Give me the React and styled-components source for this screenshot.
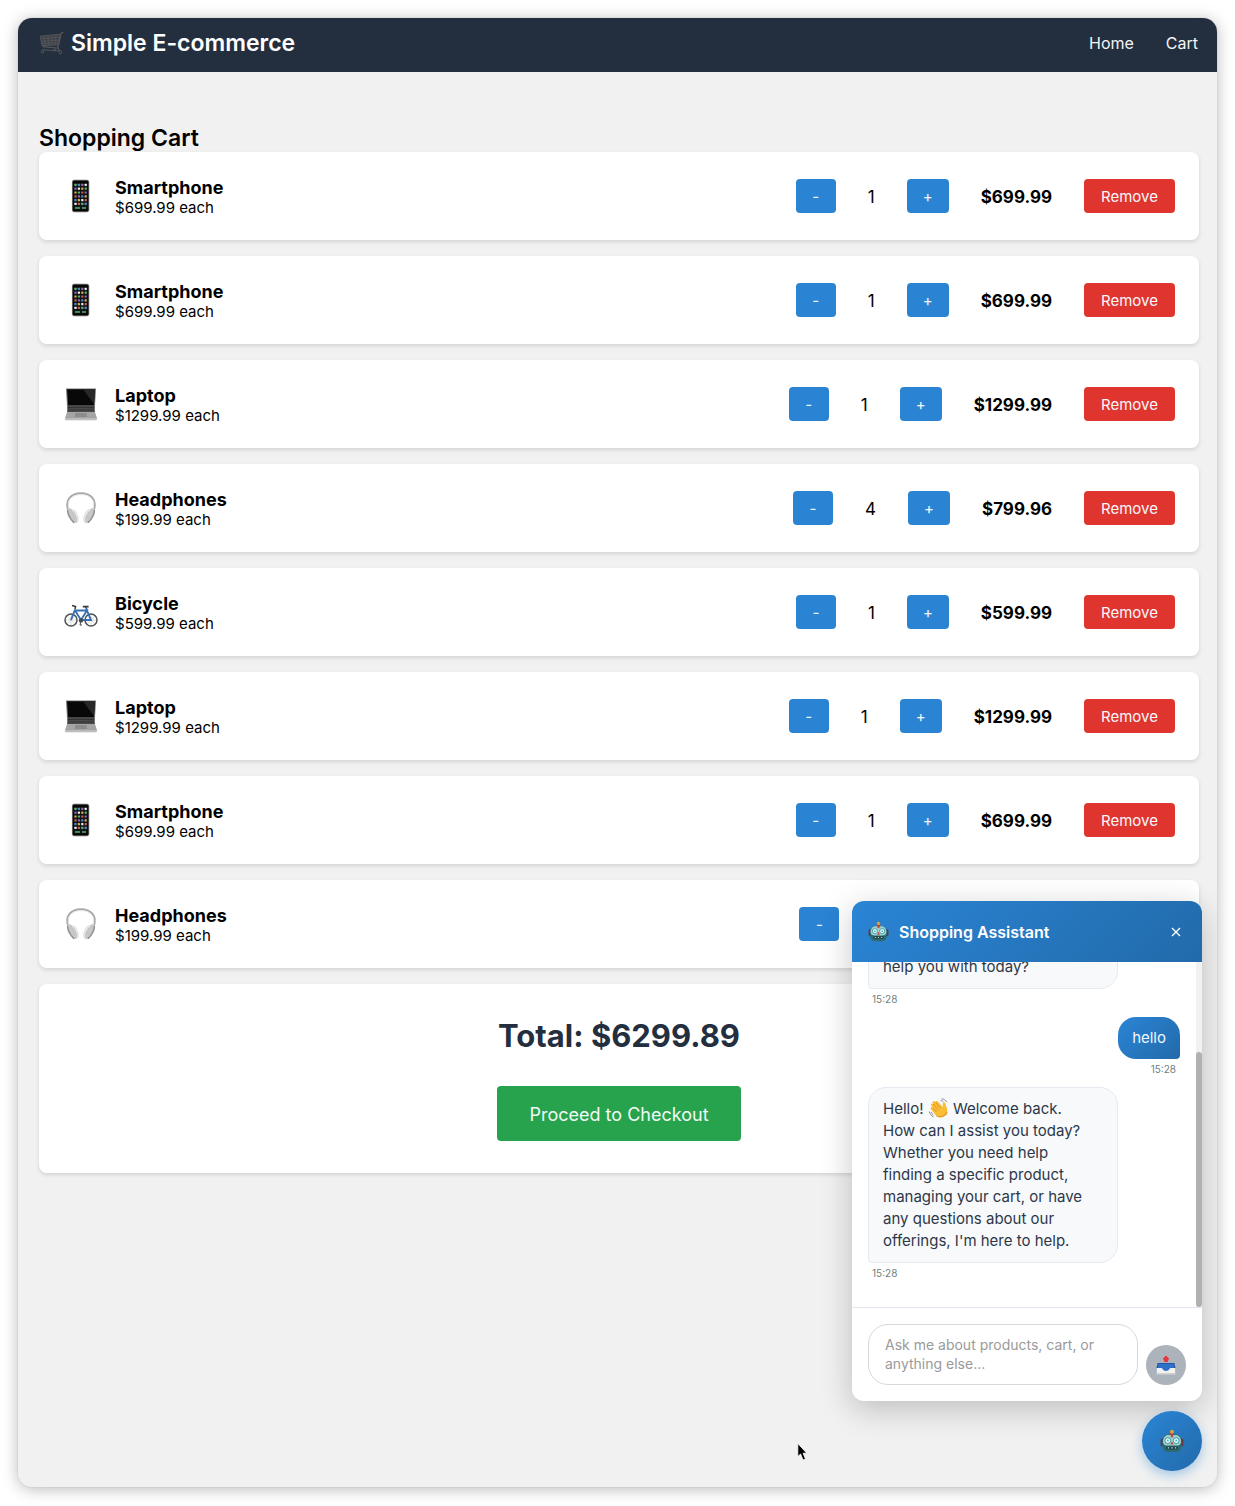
import { useEffect, useRef, useState } from 'react'
import styled, { createGlobalStyle } from 'styled-components'

const GlobalStyle = createGlobalStyle`
    * {
        box-sizing: border-box;
    }
    body {
        margin: 0;
        background: #fff;
        color: #000;
        font-family: Inter, "Liberation Sans", sans-serif;
        font-size: 15px;
    }
    h1, h2, h3, p, ul {
        margin: 0;
        padding: 0;
    }
    button, textarea {
        font-family: inherit;
    }
    svg {
        display: block;
    }
`

const Page = styled.div`
    min-height: 100vh;
    padding: 18px 18px 19px;
    display: flex;
`

const Window = styled.div`
    position: relative;
    flex: 1;
    min-width: 0;
    background: #f1f1f1;
    border-radius: 14px;
    overflow: hidden;
`

const WindowShadow = styled.div`
    flex: 1;
    display: flex;
    min-width: 0;
    border-radius: 14px;
    box-shadow: 0 0 1px rgba(0, 0, 0, 0.3), 0 2px 16px rgba(0, 0, 0, 0.28);
`

const Header = styled.header`
    display: flex;
    justify-content: space-between;
    align-items: center;
    height: 54px;
    padding: 0 19px 4px 21px;
    background: #232f3e;
    color: #fff;
`

const Brand = styled.h1`
    display: flex;
    align-items: center;
    gap: 7px;
    font-size: 23px;
    font-weight: 600;
`

const Nav = styled.nav`
    display: flex;
    gap: 32px;

    a {
        color: #f4f5f6;
        font-size: 16px;
        line-height: 18px;
        text-decoration: none;
    }
`

const Main = styled.main`
    padding: 53px 18px 40px 21px;
`

const Title = styled.h2`
    font-size: 23px;
    line-height: 27px;
    font-weight: 600;
`

const CartList = styled.ul`
    display: flex;
    flex-direction: column;
    gap: 16px;
    list-style: none;
`

const CartItem = styled.li`
    display: flex;
    align-items: center;
    justify-content: space-between;
    height: 88px;
    padding: 0 24px;
    background: #fff;
    border-radius: 8px;
    box-shadow: 0 2px 4px rgba(0, 0, 0, 0.12);
`

const Product = styled.div`
    display: flex;
    align-items: center;
    gap: 16px;
`

const ProductInfo = styled.div`
    padding-top: 2px;
`

const ProductName = styled.h3`
    font-size: 18px;
    line-height: 22px;
    font-weight: 700;
`

const ProductPrice = styled.p`
    font-size: 15px;
    line-height: 18px;
`

const Controls = styled.div`
    display: flex;
    align-items: center;
    gap: 32px;
`

const Button = styled.button`
    height: 34px;
    width: ${(props) => props.$width};
    padding: 0;
    border: none;
    border-radius: 4px;
    background: ${(props) => props.$color};
    color: #f4f8fc;
    font-size: 15px;
    cursor: pointer;
`

const Quantity = styled.span`
    padding-top: 2px;
    font-size: 17px;
`

const Subtotal = styled.strong`
    padding-top: 2px;
    font-size: 17px;
    font-weight: 700;
`

const Summary = styled.section`
    display: flex;
    flex-direction: column;
    align-items: center;
    gap: 31px;
    margin-top: 16px;
    padding: 32px;
    background: #fff;
    border-radius: 8px;
    box-shadow: 0 2px 4px rgba(0, 0, 0, 0.12);
`

const Total = styled.h3`
    color: #232f3e;
    font-size: 31px;
    line-height: 39px;
    font-weight: 700;
`

const Checkout = styled.button`
    height: 55px;
    padding: 2px 32px 0;
    border: none;
    border-radius: 4px;
    background: #27a34e;
    color: #f1faf4;
    font-size: 18px;
    cursor: pointer;
`

const ChatDock = styled.div`
    position: absolute;
    right: 15px;
    bottom: 16px;
    display: flex;
    flex-direction: column;
    align-items: flex-end;
    gap: 10px;
`

const ChatPanel = styled.section`
    display: flex;
    flex-direction: column;
    width: 350px;
    height: 500px;
    background: #fff;
    border-radius: 12px;
    overflow: hidden;
    box-shadow: 0 8px 32px rgba(0, 0, 0, 0.22);
`

const ChatHeader = styled.header`
    display: flex;
    align-items: center;
    gap: 10px;
    height: 61px;
    flex-shrink: 0;
    padding: 0 16px;
    background: linear-gradient(135deg, #2a85d5, #226aaa);
    color: #fff;
`

const ChatTitle = styled.h3`
    flex: 1;
    font-size: 16px;
    font-weight: 600;
`

const CloseButton = styled.button`
    display: grid;
    place-items: center;
    width: 20px;
    height: 20px;
    padding: 0;
    border: none;
    background: none;
    color: #fff;
    cursor: pointer;
`

const ChatBody = styled.div`
    display: flex;
    flex: 1;
    min-height: 0;
`

const Messages = styled.div`
    flex: 1;
    min-width: 0;
    padding: 82px 16px 16px;
    overflow-y: auto;
    scrollbar-width: none;
`

const ScrollTrack = styled.div`
    width: 6px;
    background: #f1f1f1;
`

const ScrollThumb = styled.div`
    border-radius: 3px;
    background: #b1b1b1;
`

const Message = styled.div`
    display: flex;
    flex-direction: column;
    align-items: ${(props) => (props.$mine ? 'flex-end' : 'flex-start')};
    gap: 4px;
    margin-bottom: 12px;
`

const Bubble = styled.p`
    max-width: 80%;
    padding: ${(props) => (props.$mine ? '10px 14px' : '10px 22px 10px 14px')};
    border: ${(props) => (props.$mine ? 'none' : '1px solid #e5e9f0')};
    border-radius: ${(props) => (props.$mine ? '18px 18px 4px 18px' : '18px 18px 18px 4px')};
    background: ${(props) => (props.$mine ? 'linear-gradient(135deg, #2a85d5, #226aaa)' : '#f7f9fb')};
    color: ${(props) => (props.$mine ? '#f2f7fc' : '#2d3748')};
    font-size: 15px;
    line-height: 22px;

    svg {
        display: inline-block;
        vertical-align: -4px;
    }
`

const Time = styled.time`
    padding: 0 4px;
    color: #718080;
    font-size: 10px;
    line-height: 12px;
`

const Composer = styled.form`
    display: flex;
    align-items: flex-end;
    gap: 8px;
    padding: 16px;
    border-top: 1px solid #e2e6ee;
`

const Input = styled.textarea`
    flex: 1;
    min-width: 0;
    height: 61px;
    padding: 10px 16px;
    border: 1px solid #d8d8d8;
    border-radius: 20px;
    background: #fff;
    font-size: 14px;
    line-height: 19px;
    resize: none;
    overflow: hidden;

    &::placeholder {
        color: #9a9a9a;
    }
`

const RoundButton = styled.button`
    display: grid;
    place-items: center;
    width: ${(props) => props.$size};
    height: ${(props) => props.$size};
    padding: 0;
    border: none;
    border-radius: 50%;
    background: ${(props) => props.$background};
    box-shadow: ${(props) => props.$shadow || 'none'};
    cursor: pointer;
`

const Pointer = styled.svg`
    position: absolute;
    left: 65%;
    bottom: 25px;
`

const CartIcon = () => (
    <svg width="25" height="25" viewBox="0 0 25 25" fill="none" stroke="#56585d" aria-hidden="true">
        <path d="M24.5 1 L22.2 2.2 L18.8 17 L3.5 15.6" strokeWidth="1.2" />
        <path d="M1.2 5.2 L21.6 3.2 L19.2 14 L3 14.6 Z" fill="#3d4248" strokeWidth="0.9" />
        <path d="M1.8 7.8 L21 6 M2.2 10.4 L20.3 9 M2.8 12.6 L19.8 11.6 M5 5 L6.4 14.4 M9 4.6 L9.6 14.2 M13 4.2 L13 14 M17 3.8 L16.3 14" strokeWidth="0.7" />
        <path d="M18.8 17 L20.8 20 L3 18.8" strokeWidth="1.1" />
        <circle cx="3.6" cy="20.8" r="1.3" fill="#292b2e" />
        <circle cx="21.4" cy="21.4" r="1.5" fill="#292b2e" />
        <circle cx="15.8" cy="19" r="1" fill="#292b2e" />
    </svg>
)

const appColors = ['#55b565', '#e7ebea', '#5287c5', '#d35b4e', '#dfac44', '#9564ab']

const PhoneIcon = () => (
    <svg width="36" height="36" viewBox="0 0 36 36" aria-hidden="true">
        <rect x="9.4" y="2.2" width="16.4" height="31.6" rx="1.8" fill="#080808" stroke="#555" strokeWidth="0.7" />
        <rect x="10.9" y="5" width="13.4" height="26" fill="#111519" />
        {[0, 1, 2, 3, 4, 5].map((row) => [0, 1, 2, 3].map((col) => (
            <rect
                key={`${row}-${col}`}
                x={11.4 + col * 3.4}
                y={5.8 + row * 3.8}
                width="2.2"
                height="2.2"
                rx="0.5"
                fill={appColors[(row * 5 + col * 2 + (col > 1 ? 1 : 0)) % 6]}
            />
        )))}
        <path d="M12 30 H17 M19 30 H23" stroke="#53b065" strokeWidth="1.6" />
    </svg>
)

const LaptopIcon = () => (
    <svg width="36" height="36" viewBox="0 0 36 36" aria-hidden="true">
        <path d="M3 2.5 H33 L31.8 23 H4.2 Z" fill="#777" />
        <path d="M4 3.2 H32 L31 19.5 H5 Z" fill="#080808" />
        <path d="M20 3.2 H32 L31 18 Z" fill="#27282a" />
        <path d="M5 19.5 H31 L32 26.5 H4 Z" fill="#4a4a4c" />
        <path d="M5 21.5 H31 M4.6 24 H31.4" stroke="#343435" strokeWidth="1" />
        <path d="M4 26 H32 L34 32.5 H2 Z" fill="#a5a5a5" />
        <path d="M12.5 27 H23.5 L24.3 31 H11.7 Z" fill="#8c8c8c" />
        <path d="M2 32.5 H34 L33.3 34 H2.7 Z" fill="#c9c9c9" stroke="#999" strokeWidth="0.4" />
    </svg>
)

const HeadphonesIcon = () => (
    <svg width="36" height="36" viewBox="0 0 36 36" fill="none" aria-hidden="true">
        <path d="M5.5 21 C1 9 9 3.2 18 3.2 S35 9 30.5 21" stroke="#a9a9a9" strokeWidth="2" />
        <path d="M6.2 20 C2.5 9.5 10 4.5 18 4.5 S33.5 9.5 29.8 20" stroke="#e3e3e3" strokeWidth="1" />
        <path d="M4.2 19.5 C6 17 9 18.5 11 21.5 L14.4 28 C16 31.5 13 34.5 10.5 32.4 L5 25 Z" fill="#c6c7c9" />
        <path d="M9 20 C12.5 20 16.5 27 14.5 32" stroke="#e6e6e6" strokeWidth="1.8" />
        <path d="M4.5 20 C4.8 25 7.5 29.5 11 32.8" stroke="#8d8e90" strokeWidth="1.4" />
        <path d="M31.8 19.5 C30 17 27 18.5 25 21.5 L21.6 28 C20 31.5 23 34.5 25.5 32.4 L31 25 Z" fill="#c6c7c9" />
        <path d="M27 20 C23.5 20 19.5 27 21.5 32" stroke="#e6e6e6" strokeWidth="1.8" />
        <path d="M31.5 20 C31.2 25 28.5 29.5 25 32.8" stroke="#8d8e90" strokeWidth="1.4" />
    </svg>
)

const BicycleIcon = () => (
    <svg width="36" height="36" viewBox="0 -4 36 36" fill="none" aria-hidden="true">
        <g fill="#f3f4f5" stroke="#bfc2c5" strokeWidth="0.6">
            <path d="M2.5 22 H13.5 M8 17 V27 M4.1 18.1 L11.9 25.9 M4.1 25.9 L11.9 18.1" />
            <path d="M22.5 22 H33.5 M28 17 V27 M24.1 18.1 L31.9 25.9 M24.1 25.9 L31.9 18.1" />
        </g>
        <g stroke="#505357" strokeWidth="1.5">
            <circle cx="8" cy="22" r="6" />
            <circle cx="28" cy="22" r="6" />
        </g>
        <path d="M8 22 L12 11.5 M12 12.5 H24 L18 22 L12 12.5 M24 12.5 L28 22 H18 M22.8 9 L24.3 13" stroke="#356fb5" strokeWidth="1.9" />
        <path d="M9 7.5 L12.5 8.5 L12 11 M19.8 8.6 H25.6" stroke="#38393b" strokeWidth="1.6" />
        <circle cx="18" cy="22.4" r="2.2" fill="#454a50" />
        <path d="M18 23 L17 27 H19" stroke="#454a50" strokeWidth="1" />
    </svg>
)

const RobotIcon = ({ size }) => (
    <svg width={size} height={size} viewBox="0 0 24 24" aria-hidden="true">
        <rect x="0.6" y="9.5" width="4" height="8" rx="1.8" fill="#6b3642" />
        <rect x="19.4" y="9.5" width="4" height="8" rx="1.8" fill="#6b3642" />
        <path d="M10 3 H14 V6.5 H10 Z" fill="#a83c33" />
        <circle cx="12" cy="2.8" r="2" fill="#d9a43b" />
        <path d="M7 5.6 H17 C20 6.6 21.8 9.5 21.8 13 C21.8 19 20.6 23 16.5 23 H7.5 C3.4 23 2.2 19 2.2 13 C2.2 9.5 4 6.6 7 5.6 Z" fill="#2d6a72" />
        <path d="M7.2 6 H16.8 C19.6 7 21 9.6 21 12.4 C21 14.5 20 16.5 17 16.5 H7 C4 16.5 3 14.5 3 12.4 C3 9.6 4.4 7 7.2 6 Z" fill="#9ed2cf" />
        <path d="M10.4 5.6 H13.6 L13 8.4 H11 Z" fill="#bf5046" />
        <circle cx="7.8" cy="11.6" r="2.9" fill="#e4fffd" stroke="#3c94a0" strokeWidth="1" />
        <circle cx="16.2" cy="11.6" r="2.9" fill="#e4fffd" stroke="#3c94a0" strokeWidth="1" />
        <circle cx="7.8" cy="11.6" r="1.1" fill="#55b9c7" />
        <circle cx="16.2" cy="11.6" r="1.1" fill="#55b9c7" />
        <path d="M12 12.2 L13.7 15.6 H10.3 Z" fill="#c44a42" />
        <rect x="6" y="17.4" width="12" height="3" rx="1.4" fill="#1c4149" />
        <path d="M7.8 18.8 H9.2 M11.3 18.8 H12.7 M14.8 18.8 H16.2" stroke="#b9d6d3" strokeWidth="1.3" />
    </svg>
)

const WaveIcon = () => (
    <svg width="21" height="20" viewBox="0 0 20 20" fill="none" aria-hidden="true">
        <path d="M7.5 17.5 L2.4 11.2 C1.5 9.6 3.1 8.8 4.1 9.8 L2.6 7.2 C1.9 5.6 3.6 4.8 4.6 6.1 L4.2 4.7 C3.8 3 5.6 2.5 6.5 3.8 L7 4.3 C7 2.7 8.7 2.5 9.5 3.8 L14.2 9 L14.3 5.8 C14.5 3.9 16.7 4.1 17 5.8 C17.2 8.2 19.2 10.5 18.8 13.8 C18.2 18.5 11.6 21.3 7.5 17.5 Z" fill="#f9be35" />
        <path d="M4.1 9.8 L8 14 M4.6 6.1 L10 12.3 M7 4.3 L12 10.4" stroke="#d7902a" strokeWidth="0.9" />
        <path d="M8 17.8 C12.5 20.2 17.5 17.8 18.6 14" stroke="#e49b29" strokeWidth="1.3" />
        <path d="M13 0.8 C15.5 1 17.2 2 18 4 M12.2 2.6 C13.6 2.7 14.5 3.2 15 4 M0.8 13.5 C1.3 16 2.6 17.8 5 18.8 M2.6 14 C3 15.3 3.7 16.2 4.8 17" stroke="#8a8c91" strokeWidth="1" />
    </svg>
)

const OutboxIcon = () => (
    <svg width="20" height="20" viewBox="0 0 20 20" aria-hidden="true">
        <path d="M1.6 8 H18.4 L19.5 13 V19 H0.5 V13 Z" fill="#2157a5" />
        <path d="M2.5 9 H17.5 L18.3 12.5 C14 12.5 14 16 10 16 S6 12.5 1.7 12.5 Z" fill="#2d71cb" />
        <path d="M0.5 13 H5.5 C6.5 13 6.8 16 10 16 S13.5 13 14.5 13 H19.5 V19.2 H0.5 Z" fill="#f1f1ef" />
        <path d="M0.5 18 H19.5 V19.2 H0.5 Z" fill="#cfd0d0" />
        <path d="M10 1 L13 4 H11.6 V6.6 H8.4 V4 H7 Z" fill="#e93640" stroke="#e93640" strokeLinejoin="round" />
    </svg>
)

const CloseIcon = () => (
    <svg width="10" height="10" viewBox="0 0 10 10" fill="none" stroke="currentColor" strokeWidth="1.4" aria-hidden="true">
        <path d="M1 1 L9 9 M9 1 L1 9" />
    </svg>
)

const cart = [
    { id: 1, name: 'Smartphone', price: 699.99, quantity: 1, Icon: PhoneIcon },
    { id: 2, name: 'Smartphone', price: 699.99, quantity: 1, Icon: PhoneIcon },
    { id: 3, name: 'Laptop', price: 1299.99, quantity: 1, Icon: LaptopIcon },
    { id: 4, name: 'Headphones', price: 199.99, quantity: 4, Icon: HeadphonesIcon },
    { id: 5, name: 'Bicycle', price: 599.99, quantity: 1, Icon: BicycleIcon },
    { id: 6, name: 'Laptop', price: 1299.99, quantity: 1, Icon: LaptopIcon },
    { id: 7, name: 'Smartphone', price: 699.99, quantity: 1, Icon: PhoneIcon },
    { id: 8, name: 'Headphones', price: 199.99, quantity: 1, Icon: HeadphonesIcon },
]

const messages = [
    { id: 1, text: 'Welcome back! What can I help you with today?' },
    { id: 2, mine: true, text: 'hello' },
    {
        id: 3,
        text: (
            <>
                Hello! <WaveIcon /> Welcome back. How can I assist you today? Whether you need help finding a
                specific product, managing your cart, or have any questions about our offerings, I'm here to help.
            </>
        ),
    },
]

function CartRow({ item }) {
    const { name, price, quantity, Icon } = item

    return (
        <CartItem>
            <Product>
                <Icon />
                <ProductInfo>
                    <ProductName>{name}</ProductName>
                    <ProductPrice>${price.toFixed(2)} each</ProductPrice>
                </ProductInfo>
            </Product>
            <Controls>
                <Button $width="40px" $color="#2a84d3" aria-label={`Decrease ${name}`}>-</Button>
                <Quantity>{quantity}</Quantity>
                <Button $width="42px" $color="#2a84d3" aria-label={`Increase ${name}`}>+</Button>
                <Subtotal>${(price * quantity).toFixed(2)}</Subtotal>
                <Button $width="91px" $color="#e0342f">Remove</Button>
            </Controls>
        </CartItem>
    )
}

function Chat() {
    const listRef = useRef(null)
    const [thumb, setThumb] = useState({ height: 0, top: 0 })

    const updateThumb = () => {
        const { scrollTop, scrollHeight, clientHeight } = listRef.current
        const ratio = clientHeight / scrollHeight
        setThumb({ height: Math.round(clientHeight * ratio), top: Math.round(scrollTop * ratio) })
    }

    // keep the newest message in view
    useEffect(() => {
        listRef.current.scrollTop = listRef.current.scrollHeight
        updateThumb()
    }, [])

    return (
        <ChatDock>
            <ChatPanel>
                <ChatHeader>
                    <RobotIcon size={21} />
                    <ChatTitle>Shopping Assistant</ChatTitle>
                    <CloseButton aria-label="Close chat"><CloseIcon /></CloseButton>
                </ChatHeader>
                <ChatBody>
                    <Messages ref={listRef} onScroll={updateThumb}>
                        {messages.map((m) => (
                            <Message key={m.id} $mine={m.mine}>
                                <Bubble $mine={m.mine}>{m.text}</Bubble>
                                <Time>15:28</Time>
                            </Message>
                        ))}
                    </Messages>
                    <ScrollTrack>
                        <ScrollThumb style={{ height: thumb.height, marginTop: thumb.top }} />
                    </ScrollTrack>
                </ChatBody>
                <Composer onSubmit={(e) => e.preventDefault()}>
                    <Input aria-label="Message" placeholder="Ask me about products, cart, or anything else..." />
                    <RoundButton $size="40px" $background="#acb3bb" aria-label="Send"><OutboxIcon /></RoundButton>
                </Composer>
            </ChatPanel>
            <RoundButton
                $size="60px"
                $background="linear-gradient(135deg, #2a85d5, #226aaa)"
                $shadow="0 4px 12px rgba(42, 133, 213, 0.4)"
                aria-label="Toggle chat"
            >
                <RobotIcon size={24} />
            </RoundButton>
        </ChatDock>
    )
}

export default function App() {
    const total = cart.reduce((sum, item) => sum + item.price * item.quantity, 0)

    return (
        <Page>
            <GlobalStyle />
            <WindowShadow>
                <Window>
                    <Header>
                        <Brand><CartIcon />Simple E-commerce</Brand>
                        <Nav>
                            <a href="#home">Home</a>
                            <a href="#cart">Cart</a>
                        </Nav>
                    </Header>
                    <Main>
                        <Title>Shopping Cart</Title>
                        <CartList>
                            {cart.map((item) => <CartRow key={item.id} item={item} />)}
                        </CartList>
                        <Summary>
                            <Total>Total: ${total.toFixed(2)}</Total>
                            <Checkout>Proceed to Checkout</Checkout>
                        </Summary>
                    </Main>
                    <Chat />
                    <Pointer width="11" height="20" viewBox="0 0 11 20" aria-hidden="true">
                        <path d="M0.8 1.5 V14.5 L3.6 12 L6 18 L8.5 17 L6.1 11.2 H9.8 Z" fill="#000" stroke="#fff" strokeWidth="0.8" />
                    </Pointer>
                </Window>
            </WindowShadow>
        </Page>
    )
}
